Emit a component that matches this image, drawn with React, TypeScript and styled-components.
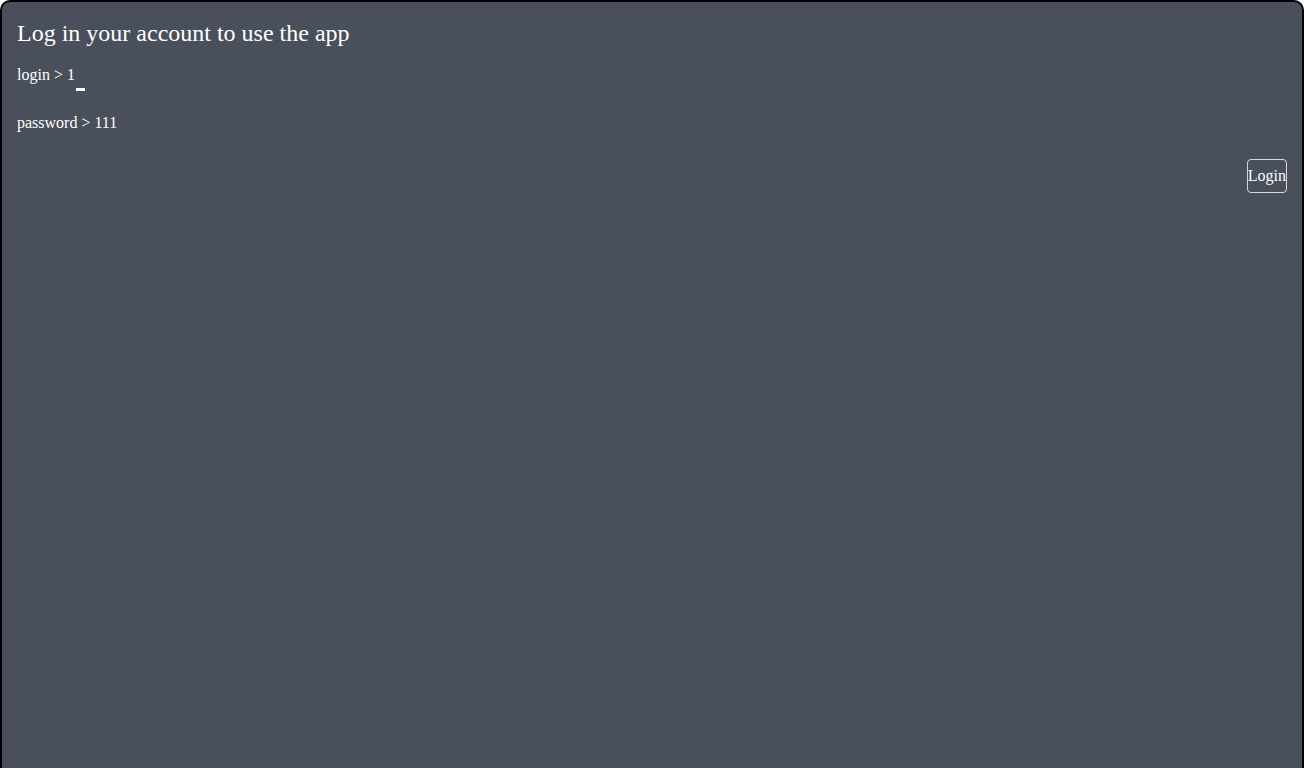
import React from "react";
import styled, { createGlobalStyle } from "styled-components";

const GlobalStyle = createGlobalStyle`
  html, body {
    margin: 0;
    padding: 0;
    background: #ffffff;
  }
  body {
    font-family: "Liberation Serif", "Times New Roman", serif;
  }
`;

const Frame = styled.div`
  box-sizing: border-box;
  min-height: 800px;
  border: 2px solid #000000;
  border-radius: 10px;
  background: #4a505b;
  color: #ffffff;
  padding: 15px;
  display: flex;
  flex-direction: column;
`;

const Title = styled.h2`
  margin: 3px 0 0;
  font-size: 24px;
  font-weight: normal;
  line-height: normal;
`;

const Prompt = styled.div<{ $gap: number }>`
  margin-top: ${(p) => p.$gap}px;
  font-size: 16px;
  line-height: normal;
`;

const Caret = styled.span`
  display: inline-block;
  width: 9px;
  height: 3px;
  margin-left: 1px;
  background: #ffffff;
  vertical-align: -11px;
`;

const LoginButton = styled.button`
  align-self: flex-end;
  margin-top: 27px;
  height: 34px;
  padding: 0;
  border: 1px solid #d6d8dc;
  border-radius: 4px;
  background: transparent;
  color: #ffffff;
  font-family: "Liberation Serif", "Times New Roman", serif;
  font-size: 16px;
  cursor: pointer;
`;

export default function App() {
  return (
    <>
      <GlobalStyle />
      <Frame>
        <Title>Log in your account to use the app</Title>
        <Prompt $gap={19}>
          login &gt; 1
          <Caret />
        </Prompt>
        <Prompt $gap={23}>password &gt; 111</Prompt>
        <LoginButton>Login</LoginButton>
      </Frame>
    </>
  );
}
